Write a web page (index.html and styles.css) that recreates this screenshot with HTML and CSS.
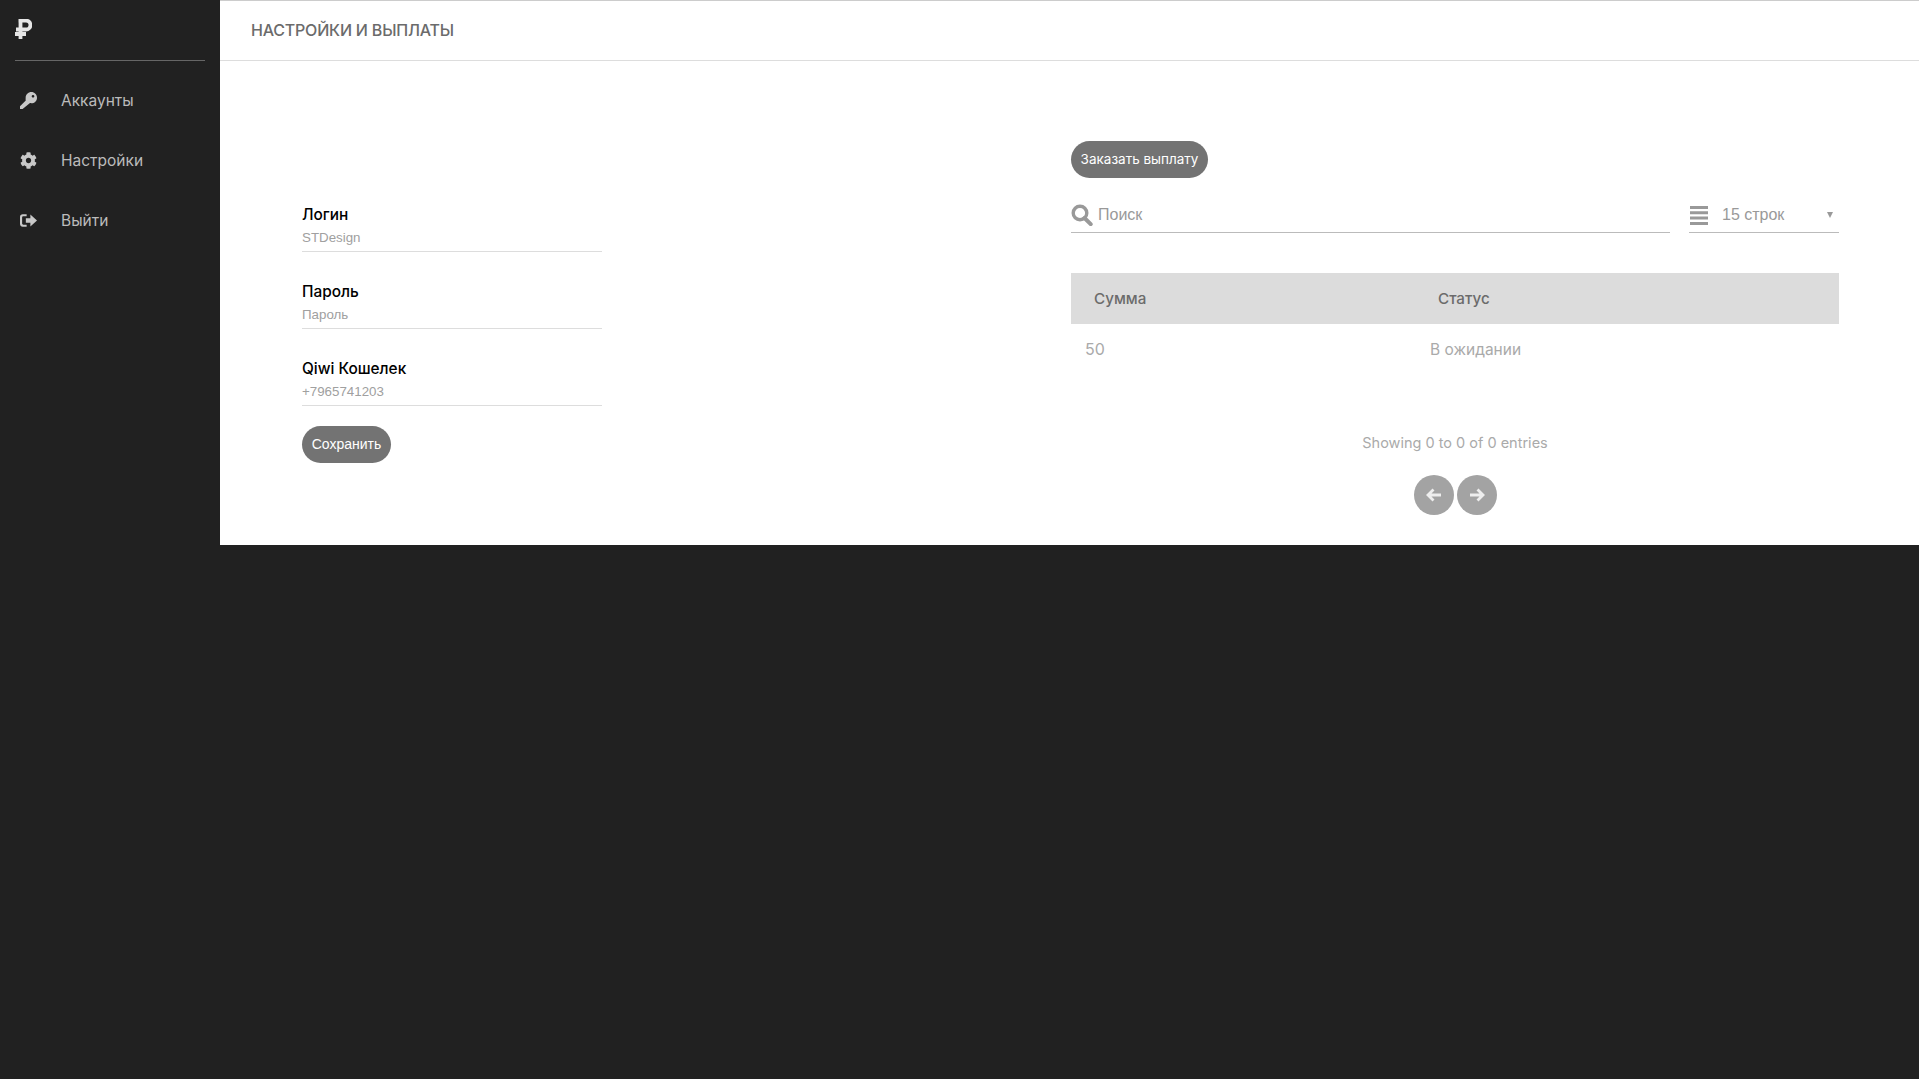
FILE: index.html
```html
<!DOCTYPE html>
<html lang="ru">
<head>
    <meta charset="UTF-8">
    <title>Настройки и выплаты</title>
    <link rel="stylesheet" href="styles.css">
</head>
<body>
    <div class="layout">
        <aside class="sidebar">
            <div class="logo">
                <svg width="17" height="20" viewBox="0 0 17 20"><path d="M5.5 0v20M1 10.5h10a4.2 4.2 0 0 0 0-8.9H3.5M0 15h11" fill="none" stroke="#e6e6e6" stroke-width="3.8"/></svg>
            </div>
            <nav class="menu">
                <a class="menu-item">
                    <svg class="menu-icon" viewBox="0 0 512 512"><path d="M512 170c0 94-76 170-170 170-14 0-28-2-41-5L78 512H0v-82l174-172c-6-15-4-60-4-88C170 76 248 0 342 0s170 76 170 170zM352 128c0 22 18 40 40 40s40-18 40-40-18-40-40-40-40 18-40 40z"/></svg>
                    <span>Аккаунты</span>
                </a>
                <a class="menu-item">
                    <svg class="menu-icon" viewBox="0 0 512 512"><path d="M487.4 315.7l-42.6-24.6c4.3-23.2 4.3-47 0-70.2l42.6-24.6c4.9-2.8 7.1-8.6 5.5-14-11.1-35.6-30-67.8-54.7-94.6-3.8-4.1-10-5.1-14.8-2.3L380.8 110c-17.9-15.4-38.5-27.3-60.8-35.1V25.8c0-5.6-3.9-10.5-9.4-11.7-36.7-8.2-74.3-7.8-109.2 0-5.5 1.2-9.4 6.1-9.4 11.7V75c-22.2 7.9-42.8 19.8-60.8 35.1L88.7 85.5c-4.9-2.8-11-1.9-14.8 2.3-24.7 26.7-43.6 58.9-54.7 94.6-1.7 5.4.6 11.2 5.5 14L67.3 221c-4.3 23.2-4.3 47 0 70.2l-42.6 24.6c-4.9 2.8-7.1 8.6-5.5 14 11.1 35.6 30 67.8 54.7 94.6 3.8 4.1 10 5.1 14.8 2.3l42.6-24.6c17.9 15.4 38.5 27.3 60.8 35.1v49.2c0 5.6 3.9 10.5 9.4 11.7 36.7 8.2 74.3 7.8 109.2 0 5.5-1.2 9.4-6.1 9.4-11.7v-49.2c22.2-7.9 42.8-19.8 60.8-35.1l42.6 24.6c4.9 2.8 11 1.9 14.8-2.3 24.7-26.7 43.6-58.9 54.7-94.6 1.5-5.5-.7-11.3-5.6-14.1zM256 336c-44.1 0-80-35.9-80-80s35.9-80 80-80 80 35.9 80 80-35.9 80-80 80z"/></svg>
                    <span>Настройки</span>
                </a>
                <a class="menu-item">
                    <svg class="menu-icon" viewBox="0 0 512 512"><path d="M512 256L312 76v110H176v140h136v110zM200 130V70H80C36 70 0 106 0 150v212c0 44 36 80 80 80h120v-60H100c-20 0-36-16-36-36V166c0-20 16-36 36-36z"/></svg>
                    <span>Выйти</span>
                </a>
            </nav>
        </aside>

        <div class="page">
            <header class="topbar">
                <h1>Настройки и выплаты</h1>
            </header>
            <main class="content">
                <section class="profile">
                    <div class="field">
                        <label>Логин</label>
                        <div class="value">STDesign</div>
                    </div>
                    <div class="field">
                        <label>Пароль</label>
                        <div class="value">Пароль</div>
                    </div>
                    <div class="field">
                        <label>Qiwi Кошелек</label>
                        <div class="value">+7965741203</div>
                    </div>
                    <button class="btn btn-save">Сохранить</button>
                </section>

                <section class="payouts">
                    <button class="btn btn-order">Заказать выплату</button>
                    <div class="filters">
                        <div class="search">
                            <svg width="22" height="22" viewBox="0 0 22 22"><circle cx="9" cy="9" r="6.8" fill="none" stroke="#999" stroke-width="3.4"/><path d="M13.5 14l6.2 6.2" stroke="#999" stroke-width="4" stroke-linecap="round"/></svg>
                            <span>Поиск</span>
                        </div>
                        <div class="rows">
                            <svg width="18" height="19" viewBox="0 0 18 19"><path d="M0 0h18v3H0zM0 5.3h18v3H0zM0 10.6h18v3H0zM0 16h18v3H0z" fill="#999"/></svg>
                            <span>15 строк</span>
                            <i class="caret"></i>
                        </div>
                    </div>
                    <table class="grid">
                        <thead>
                            <tr><th class="col-sum">Сумма</th><th>Статус</th></tr>
                        </thead>
                        <tbody>
                            <tr><td class="col-sum">50</td><td>В ожидании</td></tr>
                        </tbody>
                    </table>
                    <div class="info">Showing 0 to 0 of 0 entries</div>
                    <div class="pager">
                        <a class="pager-btn"><svg width="16" height="14" viewBox="0 0 16 14"><path d="M7.5 1.5L2 7l5.5 5.5M2.5 7H15" fill="none" stroke="#eee" stroke-width="2.8"/></svg></a>
                        <a class="pager-btn"><svg width="16" height="14" viewBox="0 0 16 14"><path d="M8.5 1.5L14 7l-5.5 5.5M13.5 7H1" fill="none" stroke="#eee" stroke-width="2.8"/></svg></a>
                    </div>
                </section>
            </main>
        </div>
    </div>
</body>
</html>
```

FILE: styles.css
```css
html, body {
    margin: 0;
    padding: 0;
    height: 100%;
    background-color: #212121;
    font-family: 'Inter', 'Liberation Sans', sans-serif;
}

.layout {
    display: flex;
    align-items: flex-start;
}

.sidebar {
    width: 220px;
    flex-shrink: 0;
    color: #bbb;
}

.logo {
    height: 61px;
    margin: 0 15px;
    padding-top: 19px;
    box-sizing: border-box;
    border-bottom: 1px solid #666;
}

.menu {
    padding-top: 9px;
}

.menu-item {
    display: flex;
    align-items: center;
    height: 60px;
    padding-left: 20px;
    font-size: 15.5px;
}

.menu-icon {
    width: 17px;
    height: 17px;
    margin-right: 24px;
    fill: #c8c8c8;
}

.page {
    flex: 1;
    height: 545px;
    background-color: #fff;
    border-top: 1px solid #ccc;
    box-sizing: border-box;
}

.topbar {
    height: 60px;
    padding: 0 0 2px 31px;
    box-sizing: border-box;
    border-bottom: 1px solid #ddd;
    display: flex;
    align-items: center;
}

.topbar h1 {
    margin: 0;
    font-size: 16px;
    font-weight: 500;
    letter-spacing: -0.2px;
    color: #6b6b6b;
    text-transform: uppercase;
}

.content {
    display: flex;
    padding: 80px 80px 0 82px;
}

.profile {
    width: 769px;
    flex-shrink: 0;
    padding-top: 61px;
}

.field {
    width: 300px;
    height: 50px;
    margin-bottom: 27px;
    box-sizing: border-box;
    border-bottom: 1px solid #ddd;
}

.field label {
    display: block;
    height: 26px;
    line-height: 25px;
    font-size: 15.4px;
    font-weight: 500;
    color: #000;
}

.value {
    font-family: 'Liberation Sans', sans-serif;
    font-size: 13.333px;
    line-height: 20px;
    color: #a0a0a0;
}

.btn {
    display: block;
    height: 37px;
    border: none;
    border-radius: 19px;
    background-color: #737373;
    color: #fff;
    padding: 0 0 2px;
}

.btn-save {
    width: 89px;
    margin-top: -7px;
    font-family: 'Liberation Sans', sans-serif;
    font-size: 14px;
}

.btn-order {
    width: 137px;
    font-family: 'Inter', sans-serif;
    font-size: 13.5px;
}

.payouts {
    flex: 1;
}

.filters {
    display: flex;
    justify-content: space-between;
    margin-top: 17px;
    font-family: 'Liberation Sans', sans-serif;
    font-size: 16px;
    color: #999;
}

.search, .rows {
    height: 38px;
    padding-top: 3px;
    box-sizing: border-box;
    border-bottom: 1px solid #bbb;
    display: flex;
    align-items: center;
}

.search {
    width: 599px;
    gap: 5px;
}

.rows {
    width: 150px;
    padding-left: 1px;
    position: relative;
}

.rows span {
    margin-left: 14px;
}

.caret {
    position: absolute;
    right: 6px;
    top: 17px;
    border-left: 3px solid transparent;
    border-right: 3px solid transparent;
    border-top: 6px solid #999;
}

.grid {
    width: 100%;
    margin-top: 40px;
    border-collapse: collapse;
    table-layout: fixed;
}

.grid th {
    height: 51px;
    padding: 0;
    background-color: #dcdcdc;
    color: #6b6b6b;
    font-size: 15.2px;
    font-weight: 500;
    text-align: left;
}

.grid th.col-sum {
    padding-left: 23px;
    width: 344px;
}

.grid td {
    height: 50px;
    padding: 0;
    color: #aaa;
    font-size: 15.5px;
}

.grid td.col-sum {
    padding-left: 14px;
    font-size: 16px;
}

.grid tbody td:last-child {
    position: relative;
    left: -8px;
}

.info {
    margin-top: 59px;
    text-align: center;
    font-size: 14.5px;
    line-height: 20px;
    color: #aaa;
}

.pager {
    display: flex;
    justify-content: center;
    gap: 3px;
    margin-top: 22px;
}

.pager-btn {
    width: 40px;
    height: 40px;
    border-radius: 50%;
    background-color: #a3a3a3;
    display: flex;
    align-items: center;
    justify-content: center;
}
```
